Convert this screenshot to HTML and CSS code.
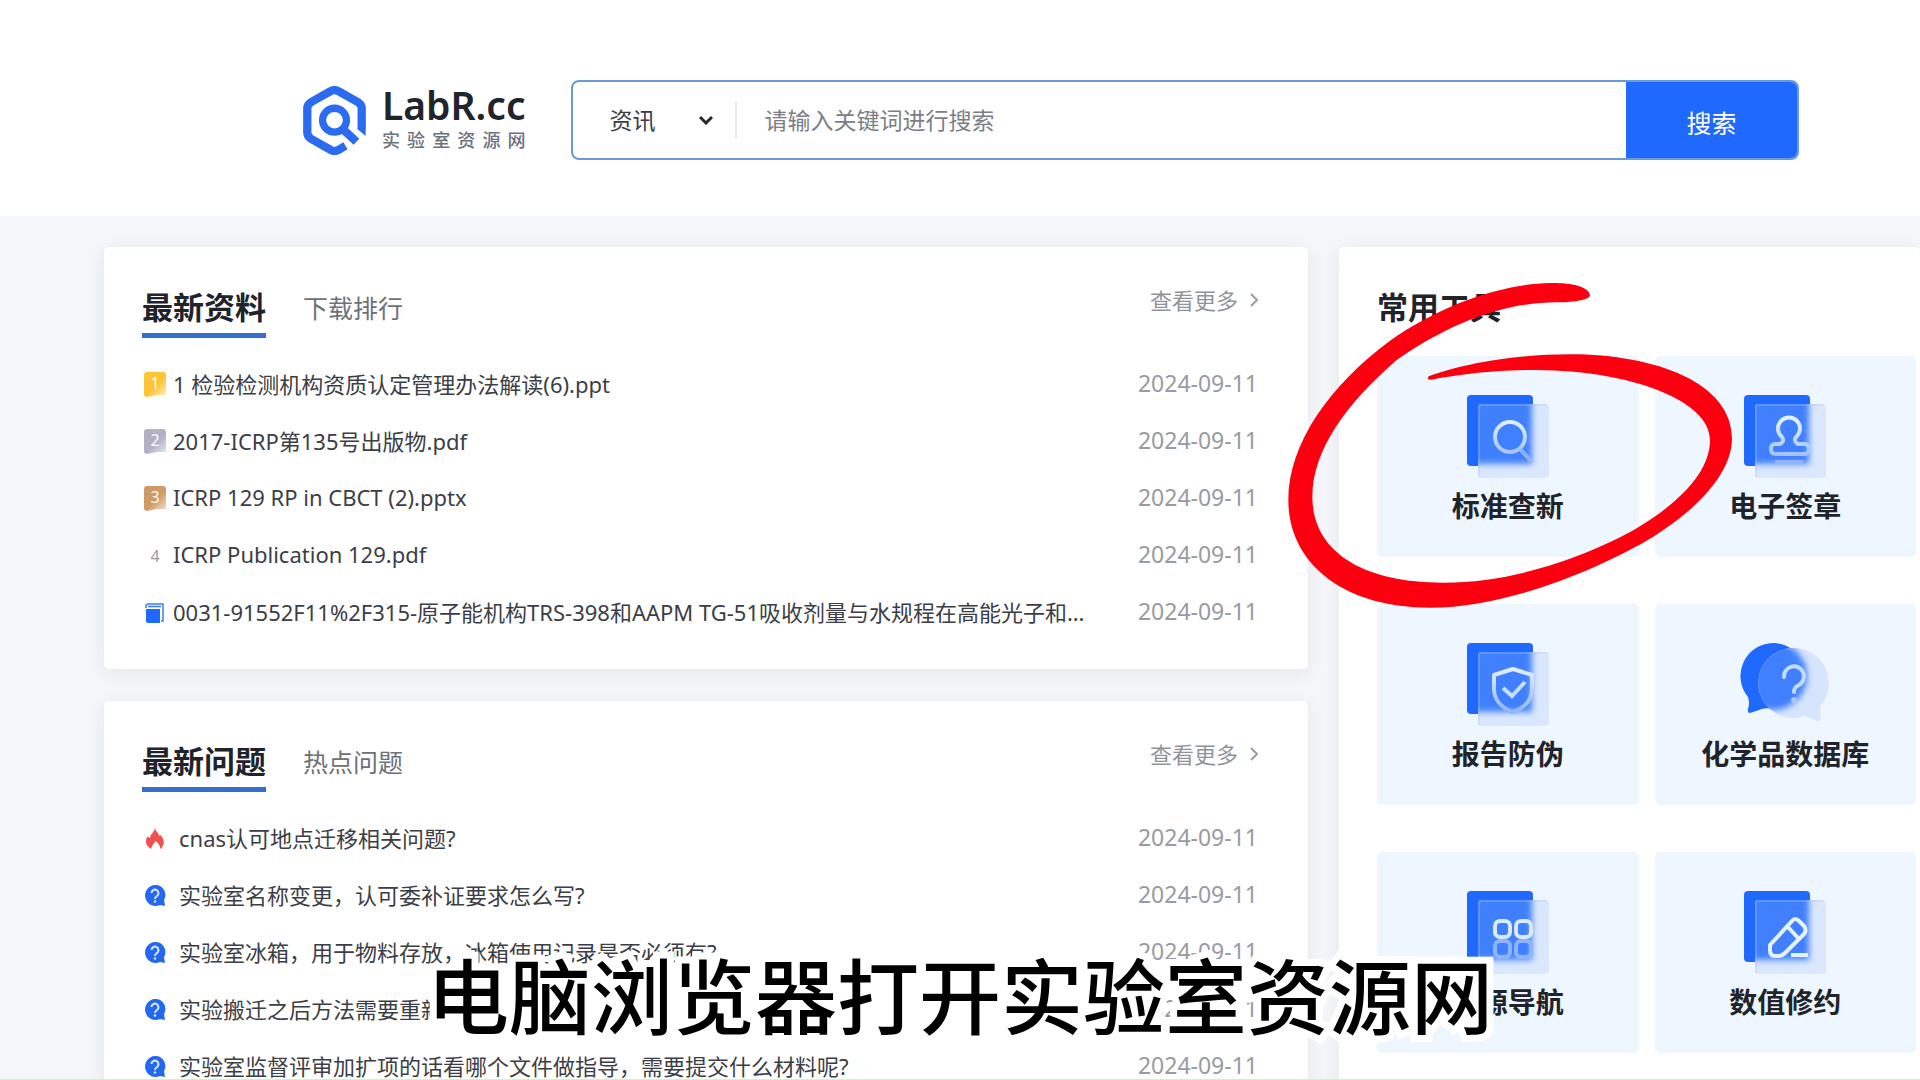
FILE: index.html
```html
<!DOCTYPE html>
<html lang="zh-CN">
<head>
<meta charset="utf-8">
<meta name="viewport" content="width=device-width, initial-scale=1">
<title>LabR.cc 实验室资源网</title>
<link rel="stylesheet" href="styles.css">
</head>
<body>
<svg class="defs" width="0" height="0" aria-hidden="true">
  <defs>
    <filter id="soft" x="-20%" y="-20%" width="140%" height="140%"><feGaussianBlur stdDeviation="3"/></filter>
    <clipPath id="front-clip"><rect x="11" y="9" width="71" height="74" rx="4"/></clipPath>
    <linearGradient id="fade" gradientUnits="userSpaceOnUse" x1="0" y1="24" x2="0" y2="70">
      <stop offset="0" stop-color="#e4f1ff"/><stop offset="1" stop-color="#8fb4ff"/>
    </linearGradient>
    <symbol id="sheet" viewBox="0 0 82 83">
      <rect width="66" height="71" rx="4" fill="#1f69fe"/>
      <rect x="11" y="9" width="71" height="74" rx="4" fill="#dbe7fe"/>
      <g clip-path="url(#front-clip)"><rect x="-8" y="-8" width="73" height="77" fill="#4180ff" filter="url(#soft)"/></g>
      <path d="M12 82V13a3 3 0 0 1 3-3H80" fill="none" stroke="#a9c6ff" stroke-width="2" opacity=".3"/>
    </symbol>
    <symbol id="ask" viewBox="0 0 22 22">
      <path d="M11 0a10 10 0 0 1 9 15l1 6-5-1A10.500 10.500 0 1 1 11 0Z" fill="#2468f2"/>
      <path d="M7.500 8a3.500 3.500 0 1 1 5.500 3c-1.500 1-2 1.500-2 3" fill="none" stroke="#dce9ff" stroke-width="2"/>
      <circle cx="11" cy="16.500" r="1.200" fill="#dce9ff"/>
    </symbol>
    <symbol id="chevron" viewBox="0 0 8 14"><path d="M1 1l6 6-6 6" fill="none" stroke="#9a9fa6" stroke-width="2"/></symbol>
  </defs>
</svg>

<div class="page">
  <header class="site-header">
    <a class="logo" href="#">
      <svg class="logo-mark" viewBox="0 0 188 208" aria-hidden="true">
        <g fill="none" stroke="#2a6bf0">
          <path d="M176 128V68Q176 56 165 49L107 16Q94 9 81 16L23 49Q12 56 12 68V140Q12 152 23 159L81 192Q94 200 107 192L127 180" stroke-width="25"/>
          <circle cx="94" cy="103" r="36" stroke-width="22"/>
          <path d="M116 127L160 168" stroke-width="25"/>
        </g>
        <path d="M163.500 126H188V151L163.500 130Z" fill="#2a6bf0"/>
      </svg>
      <span class="logo-text">
        <span class="logo-name">LabR.cc</span>
        <span class="logo-sub">实验室资源网</span>
      </span>
    </a>
    <form class="search">
      <div class="search-type">
        <select aria-label="搜索类型"><option>资讯</option></select>
        <svg class="select-arrow" viewBox="0 0 14 10" aria-hidden="true"><path d="M1 2l6 6 6-6" fill="none" stroke="#25282d" stroke-width="3"/></svg>
      </div>
      <input type="text" aria-label="关键词" placeholder="请输入关键词进行搜索">
      <button type="button">搜索</button>
    </form>
  </header>

  <main class="content">
    <div class="feeds">
      <section class="panel">
        <div class="panel-head">
          <button class="tab tab-active" type="button">最新资料</button>
          <button class="tab" type="button">下载排行</button>
          <a class="more" href="#">查看更多 <svg viewBox="0 0 8 14" aria-hidden="true"><use href="#chevron"/></svg></a>
        </div>
        <ul class="list">
          <li><span class="rank gold">1</span><a href="#">1 检验检测机构资质认定管理办法解读(6).ppt</a><time>2024-09-11</time></li>
          <li><span class="rank silver">2</span><a href="#">2017-ICRP第135号出版物.pdf</a><time>2024-09-11</time></li>
          <li><span class="rank bronze">3</span><a href="#">ICRP 129 RP in CBCT (2).pptx</a><time>2024-09-11</time></li>
          <li><span class="rank plain">4</span><a href="#">ICRP Publication 129.pdf</a><time>2024-09-11</time></li>
          <li><svg class="mark" viewBox="0 0 22 22" aria-hidden="true"><path d="M2 7h14v14H4a2 2 0 0 1-2-2Z" fill="#1f69fe"/><path d="M2 6V4a2 2 0 0 1 2-2h15v17h-2" fill="none" stroke="#3c7cff" stroke-width="1.500"/><path d="M4 4.500h13" stroke="#3c7cff" stroke-width="1.500"/></svg><a href="#">0031-91552F11%2F315-原子能机构TRS-398和AAPM TG-51吸收剂量与水规程在高能光子和电子束中的比较.pdf</a><time>2024-09-11</time></li>
        </ul>
      </section>

      <section class="panel">
        <div class="panel-head">
          <button class="tab tab-active" type="button">最新问题</button>
          <button class="tab" type="button">热点问题</button>
          <a class="more" href="#">查看更多 <svg viewBox="0 0 8 14" aria-hidden="true"><use href="#chevron"/></svg></a>
        </div>
        <ul class="list questions">
          <li><svg class="mark" viewBox="0 0 22 22" aria-hidden="true"><path d="M11 0c1 4 3 4 4 7 .5 1 1 1 1.500 0C20 11 22 17 16 21c.5-3-1-5-4.500-8C10 16 7 18 7.500 21 1 18 1 12 3.500 8.500L6 10C6 6 10 5 11 0Z" fill="#f2524f"/></svg><a href="#">cnas认可地点迁移相关问题?</a><time>2024-09-11</time></li>
          <li><svg class="mark" aria-hidden="true"><use href="#ask"/></svg><a href="#">实验室名称变更，认可委补证要求怎么写?</a><time>2024-09-11</time></li>
          <li><svg class="mark" aria-hidden="true"><use href="#ask"/></svg><a href="#">实验室冰箱，用于物料存放，冰箱使用记录是否必须有?</a><time>2024-09-11</time></li>
          <li><svg class="mark" aria-hidden="true"><use href="#ask"/></svg><a href="#">实验搬迁之后方法需要重新</a><time>2024-09-11</time></li>
          <li><svg class="mark" aria-hidden="true"><use href="#ask"/></svg><a href="#">实验室监督评审加扩项的话看哪个文件做指导，需要提交什么材料呢?</a><time>2024-09-11</time></li>
        </ul>
      </section>
    </div>

    <aside class="panel tools">
      <h2>常用工具</h2>
      <div class="tiles">
        <div class="tile-spot">
          <a class="tile" href="#">
            <svg class="tile-icon" viewBox="0 0 82 83" aria-hidden="true"><use href="#sheet"/><circle cx="43" cy="42" r="15" fill="none" stroke="url(#fade)" stroke-width="4"/><path d="M53 54l12 13" stroke="#8fb4ff" stroke-width="4"/></svg>
            <span>标准查新</span>
          </a>
          <svg class="circle-mark" viewBox="0 0 1440 1080" aria-hidden="true"><path fill="#fd0010" d="M960 75C955 48 900 38 840 39C700 42 520 100 360 212C180 345 55 520 55 690C55 880 220 1013 480 1013C720 1013 1000 890 1150 800C1300 705 1386 600 1386 505C1386 340 1160 253 900 253C720 253 570 285 478 318C470 323 474 330 482 329C560 316 660 299 800 300C1080 302 1320 390 1320 510C1320 600 1240 690 1100 775C960 855 740 938 520 938C270 938 127 840 127 680C127 540 230 400 380 270C540 160 700 97 860 97C900 97 960 92 960 75Z"/></svg>
        </div>
        <a class="tile" href="#">
          <svg class="tile-icon" viewBox="0 0 82 83" aria-hidden="true"><use href="#sheet"/><g fill="none" stroke="url(#fade)" stroke-width="4"><path d="M36 49C41 46 39 43 37 41A11 11 0 1 1 53 41C51 43 49 46 54 49H61a4 4 0 0 1 4 4v2a4 4 0 0 1-4 4H31a4 4 0 0 1-4-4v-2a4 4 0 0 1 4-4Z"/></g><path d="M31 67h28" stroke="#8fb4ff" stroke-width="4"/></svg>
          <span>电子签章</span>
        </a>
        <a class="tile" href="#">
          <svg class="tile-icon" viewBox="0 0 82 83" aria-hidden="true"><use href="#sheet"/><path d="M46 26L65 32V46C65 57 57 65 46 69C35 65 27 57 27 46V32Z" fill="none" stroke="url(#fade)" stroke-width="4" stroke-linejoin="round"/><path d="M36 45l9 8 13-14" fill="none" stroke="#c9deff" stroke-width="4"/></svg>
          <span>报告防伪</span>
        </a>
        <a class="tile" href="#">
          <svg class="tile-icon tile-icon-wide" viewBox="0 0 90 83" aria-hidden="true">
            <clipPath id="bubble-clip"><path id="bubble" d="M54 5a35 35 0 0 1 27 57q-2 4 0 12-1 5-4 4l-12-5A35 35 0 1 1 54 5Z"/></clipPath>
            <path d="M33 0a33 33 0 0 1 0 66q-8-2-14 1l-9 3q-3 0-2-4 2-6 0-12A33 33 0 0 1 33 0Z" fill="#1f69fe"/>
            <use href="#bubble" fill="#d7e4fe"/>
            <g clip-path="url(#bubble-clip)"><circle cx="33" cy="33" r="34" fill="#4180ff" filter="url(#soft)"/></g>
            <path d="M44 34a10 10 0 1 1 15 8q-5 2-5 7" fill="none" stroke="#c4dbff" stroke-width="4" stroke-linecap="round"/><circle cx="54" cy="57" r="3" fill="#a9c8ff"/>
          </svg>
          <span>化学品数据库</span>
        </a>
        <a class="tile" href="#">
          <svg class="tile-icon" viewBox="0 0 82 83" aria-hidden="true"><use href="#sheet"/><g fill="none" stroke-width="4"><g stroke="#d9eaff"><rect x="28" y="30" width="15" height="16" rx="5"/><rect x="49" y="30" width="15" height="16" rx="5"/></g><g stroke="#8fb4ff"><rect x="28" y="50" width="15" height="16" rx="5"/><rect x="49" y="50" width="15" height="16" rx="5"/></g></g></svg>
          <span>资源导航</span>
        </a>
        <a class="tile" href="#">
          <svg class="tile-icon" viewBox="0 0 82 83" aria-hidden="true"><use href="#sheet"/><g fill="none" stroke="#e4f2ff" stroke-width="4" stroke-linejoin="round"><path d="M26 59V54L48 30Q51 26 55 30L60 35Q63 39 60 43L41 62Q38 65 35 65H31Q26 65 26 59ZM44 36l10 11"/><path d="M47 64h17"/></g></svg>
          <span>数值修约</span>
        </a>
      </div>
    </aside>
  </main>

  <p class="caption">电脑浏览器打开实验室资源网</p>
</div>
</body>
</html>
```
FILE: styles.css
```css
* {
  box-sizing: border-box;
}

body {
  margin: 0;
  background: #f4f6f9;
  color: #3b3e46;
  font-family: "Noto Sans", "Noto Sans CJK SC", sans-serif;
  font-size: 22px;
}

button,
input,
select {
  margin: 0;
  padding: 0;
  border: 0;
  border-radius: 0;
  outline: 0;
  background: none;
  color: inherit;
  font: inherit;
}

a {
  color: inherit;
  text-decoration: none;
}

.defs {
  position: absolute;
}

.page {
  position: relative;
  height: 100vh;
  overflow: hidden;
  border-bottom: 1px solid #cdf6c6;
}

/* Header */
.site-header {
  display: flex;
  align-items: center;
  gap: 45px;
  padding: 80px 121px 56px 303px;
  background: #fff;
}

.logo {
  display: flex;
  align-items: center;
  gap: 16px;
}

.logo-mark {
  width: 63px;
  height: 69px;
}

.logo-text {
  display: flex;
  flex-direction: column;
  padding-bottom: 4px;
}

.logo-name {
  color: #20242b;
  font-size: 39px;
  font-weight: 600;
  line-height: 44px;
}

.logo-sub {
  color: #6a7280;
  font-size: 18px;
  font-weight: 500;
  line-height: 26px;
  text-align-last: justify;
}

.search {
  display: flex;
  flex: 1;
  height: 80px;
  border: 2px solid #6a9bd8;
  border-radius: 8px;
  background: #fff;
  font-size: 23px;
  overflow: hidden;
}

.search-type {
  position: relative;
  display: flex;
  align-items: center;
  width: 164px;
}

.search-type select {
  width: 100%;
  height: 36px;
  padding-left: 37px;
  border-right: 2px solid #e8e9ec;
  appearance: none;
}

.select-arrow {
  position: absolute;
  right: 24px;
  width: 14px;
  height: 10px;
  pointer-events: none;
}

.search input {
  flex: 1;
  min-width: 0;
  padding-left: 28px;
}

.search input::placeholder {
  color: #7b7e84;
}

.search button {
  width: 171px;
  padding-top: 4px;
  background: #1f69fe;
  color: #fff;
  font-size: 25px;
}

/* Panels */
.content {
  display: flex;
  align-items: stretch;
  gap: 31px;
  padding: 31px 0 0 104px;
}

.feeds {
  display: flex;
  flex: 1;
  flex-direction: column;
  gap: 32px;
  min-width: 0;
}

.panel {
  padding: 37px 50px 30px 38px;
  border-radius: 5px;
  background: #fff;
  box-shadow: 0 4px 18px rgba(40, 50, 80, 0.08);
}

.panel-head {
  display: flex;
  align-items: flex-start;
}

.tab {
  margin-right: 37px;
  color: #6d7178;
  font-size: 25px;
  line-height: 49px;
}

.tab-active {
  padding-bottom: 3px;
  border-bottom: 5px solid #366ed0;
  color: #20232a;
  font-size: 31px;
  font-weight: 700;
  line-height: 46px;
}

.more {
  display: flex;
  align-items: center;
  gap: 12px;
  margin-left: auto;
  color: #8f949b;
  line-height: 32px;
}

.more svg {
  width: 8px;
  height: 14px;
}

.list {
  margin: 16px 0 0;
  padding: 0;
  list-style: none;
}

.list li {
  display: flex;
  align-items: center;
  gap: 7px;
  height: 57px;
  padding-left: 2px;
}

.questions li {
  gap: 13px;
}

.list a {
  flex: 1;
  min-width: 0;
  max-width: 922px;
  overflow: hidden;
  text-overflow: ellipsis;
  white-space: nowrap;
}

.list time {
  margin-left: auto;
  color: #979ba2;
  font-size: 23px;
}

.mark {
  flex: none;
  width: 22px;
  height: 22px;
  margin-top: 4px;
}

.rank {
  flex: none;
  width: 22px;
  height: 25px;
  margin-top: 4px;
  border-radius: 3px;
  color: #fff;
  font-size: 16px;
  line-height: 22px;
  text-align: center;
  clip-path: polygon(0 0, 100% 0, 100% 92%, 60% 92%, 12% 100%, 0 100%);
}

.gold {
  background: linear-gradient(135deg, #fdc536 55%, #fff0c4);
}

.silver {
  background: linear-gradient(135deg, #b3afc4 55%, #eceaf2);
}

.bronze {
  background: linear-gradient(135deg, #d09a66 55%, #f6e4d2);
}

.plain {
  color: #979ba2;
  line-height: 27px;
}

/* Tools */
.tools {
  width: 581px;
  padding-right: 4px;
}

.tools h2 {
  margin: 0 0 26px;
  color: #20232a;
  font-size: 31px;
  line-height: 46px;
}

.tiles {
  display: grid;
  grid-template-columns: 1fr 1fr;
  gap: 47px 16px;
}

.tile-spot {
  position: relative;
}

.tile {
  display: flex;
  flex-direction: column;
  align-items: center;
  gap: 8px;
  padding: 39px 0 31px;
  border-radius: 5px;
  background: #eef6ff;
  color: #20232a;
  font-size: 28px;
  font-weight: 700;
  line-height: 40px;
}

.tile-icon {
  width: 82px;
  height: 83px;
}

.tile-icon-wide {
  width: 90px;
}

/* Hand-drawn ring round the first tool */
.circle-mark {
  position: absolute;
  top: -86px;
  left: -107px;
  z-index: 1;
  width: 480px;
  height: 360px;
  pointer-events: none;
}

/* Video subtitle */
.caption {
  position: absolute;
  right: 0;
  bottom: 26px;
  left: 0;
  z-index: 2;
  margin: 0;
  color: #000;
  font-family: "Noto Sans CJK SC", sans-serif;
  font-size: 82px;
  font-weight: 500;
  line-height: 120px;
  text-align: center;
  -webkit-text-stroke: 14px #fff;
  paint-order: stroke fill;
  stroke-linejoin: round;
}
```
